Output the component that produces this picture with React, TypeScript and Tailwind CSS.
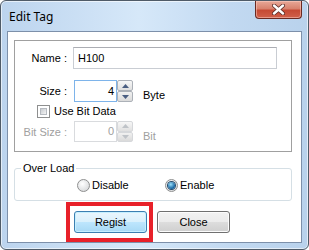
import React from 'react';

const ui = "font-['Liberation_Sans',Arial,sans-serif] text-[11px] leading-[13px]";

function Arrow({ dir, disabled }: { dir: 'up' | 'down'; disabled?: boolean }) {
  return (
    <svg width="7" height="4" viewBox="0 0 7 4">
      <path d={dir === 'up' ? 'M0 4 L3.5 0 L7 4 Z' : 'M0 0 L3.5 4 L7 0 Z'} fill={disabled ? '#bfc3c8' : '#4a5e82'} />
    </svg>
  );
}

function SpinBox({ value, disabled, focused, height }: { value: string; disabled?: boolean; focused?: boolean; height: string }) {
  return (
    <div className={`flex ${height}`}>
      <div
        className={`w-[43px] h-full border bg-white flex items-center justify-end pr-[2px] ${
          focused ? 'border-[#7eb4ea]' : 'border-[#d9dbde]'
        } ${disabled ? 'text-[#a0a0a0]' : 'text-black'}`}
      >
        {value}
      </div>
      <div className="flex flex-col w-[16px] h-full">
        <div className={`flex-1 flex items-center justify-center border rounded-[2px] bg-gradient-to-b from-[#f7f7f7] to-[#e0e0e0] ${disabled ? 'border-[#d6d8db]' : 'border-[#acb1b8]'}`}>
          <Arrow dir="up" disabled={disabled} />
        </div>
        <div className={`flex-1 flex items-center justify-center border rounded-[2px] bg-gradient-to-b from-[#f1f1f1] to-[#dadada] ${disabled ? 'border-[#d6d8db]' : 'border-[#acb1b8]'}`}>
          <Arrow dir="down" disabled={disabled} />
        </div>
      </div>
    </div>
  );
}

function Radio({ checked, label }: { checked?: boolean; label: string }) {
  return (
    <div className="flex items-center gap-[2px]">
      <span className="w-[13px] h-[13px] rounded-full border border-[#8e8f8f] bg-[radial-gradient(circle_at_40%_35%,#ffffff,#cfd1d3)] flex items-center justify-center">
        {checked && <span className="w-[7px] h-[7px] rounded-full bg-[radial-gradient(circle_at_40%_35%,#9be0fb,#10609e_70%)] ring-1 ring-[#244a6b]" />}
      </span>
      <span className="text-black">{label}</span>
    </div>
  );
}

function WinButton({ label, primary }: { label: string; primary?: boolean }) {
  return (
    <button
      className={`w-[73px] h-[22px] rounded-[3px] border flex items-center justify-center text-black ${
        primary
          ? 'border-[#3c7fb1] bg-[linear-gradient(#eaf6fd_0%,#d9f0fc_50%,#bee6fd_50%,#a7d9f5_100%)] shadow-[inset_0_0_0_1px_#c6f0ff]'
          : 'border-[#707070] bg-[linear-gradient(#f2f2f2_0%,#ebebeb_50%,#dddddd_50%,#cfcfcf_100%)] shadow-[inset_0_0_0_1px_#fcfcfc]'
      }`}
    >
      {label}
    </button>
  );
}

export default function App() {
  return (
    <div className="w-[309px] h-[250px] bg-white overflow-hidden">
      <div className="w-[309px] h-[250px] rounded-[6px] border border-[#4f5b68] bg-[linear-gradient(90deg,#bcd4ee_0%,#d6e8f9_45%,#c2d9f1_75%,#b9d2ec_100%)] flex flex-col shadow-[inset_0_0_0_1px_rgba(255,255,255,0.6)]">
        {/* title bar */}
        <div className="h-[30px] flex items-start justify-between">
          <span className="pl-[8px] pt-[8px] font-['Noto_Sans',sans-serif] text-[12px] leading-[16px] text-black">Edit Tag</span>
          <div className="mr-[6px] w-[47px] h-[18px] rounded-b-[4px] border border-t-0 border-[#6a2a22] bg-[linear-gradient(#e8a898_0%,#d8826e_45%,#c64a34_55%,#d0604a_100%)] flex items-center justify-center shadow-[inset_0_0_0_1px_rgba(255,210,200,0.5)]">
            <svg width="13" height="11" viewBox="0 0 13 11">
              <path d="M2 1.5 L11 9.5 M11 1.5 L2 9.5" stroke="#5a2a24" strokeWidth="4" strokeLinecap="round" />
              <path d="M2 1.5 L11 9.5 M11 1.5 L2 9.5" stroke="#ffffff" strokeWidth="2.4" strokeLinecap="round" />
            </svg>
          </div>
        </div>

        {/* client area */}
        <div className={`${ui} mx-[6px] h-[212px] bg-white border border-[#7d90aa] flex flex-col overflow-hidden`}>
          {/* tag group */}
          <div className="ml-[6px] mt-[8px] w-[278px] h-[112px] border border-[#a0a0a0] flex flex-col">
            <div className="mt-[6px] flex items-center">
              <span className="w-[52px] text-right">Name :</span>
              <div className="ml-[6px] w-[204px] h-[22px] border border-[#c9cdd3] border-t-[#abadb3] flex items-center pl-[4px]">H100</div>
            </div>

            <div className="mt-[11px] flex">
              <span className="w-[52px] text-right self-center">Size :</span>
              <div className="ml-[7px]">
                <SpinBox value="4" focused height="h-[22px]" />
              </div>
              <span className="ml-[10px] pt-[9px]">Byte</span>
            </div>

            <div className="mt-[3px] flex items-center">
              <div className="ml-[22px] w-[13px] h-[13px] border border-[#8e8f8f] bg-white p-[2px]">
                <div className="w-full h-full border border-[#b6bac0] bg-gradient-to-br from-[#c8ccd0] to-[#f4f4f4]" />
              </div>
              <span className="ml-[4px]">Use Bit Data</span>
            </div>

            <div className="mt-[3px] flex text-[#a0a0a0]">
              <span className="w-[52px] text-right self-center">Bit Size :</span>
              <div className="ml-[7px]">
                <SpinBox value="0" disabled height="h-[21px]" />
              </div>
              <span className="ml-[10px] pt-[9px]">Bit</span>
            </div>
          </div>

          {/* over load group */}
          <fieldset className="ml-[6px] mt-[10px] w-[278px] border border-[#d5dfe5] rounded-[3px] px-0 pb-[8px]">
            <legend className="ml-[6px] px-[2px] text-black">Over Load</legend>
            <div className="mt-[4px] pl-[62px] flex">
              <div className="w-[88px]">
                <Radio label="Disable" />
              </div>
              <Radio label="Enable" checked />
            </div>
          </fieldset>

          {/* buttons */}
          <div className="mt-[1px] flex items-start">
            <div className="ml-[58px] w-[87px] h-[40px] border-4 border-[#e8212a] pl-[4px] pt-[5px]">
              <WinButton label="Regist" primary />
            </div>
            <div className="ml-[4px] mt-[9px]">
              <WinButton label="Close" />
            </div>
          </div>
        </div>
      </div>
    </div>
  );
}
